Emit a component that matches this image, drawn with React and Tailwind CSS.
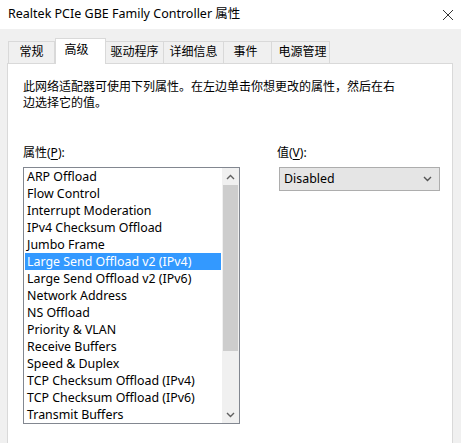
import React from 'react';

const tabs = ['常规', '高级', '驱动程序', '详细信息', '事件', '电源管理'];
const tabWidths = ['w-[47px]', 'w-[51px]', 'w-[58px]', 'w-[60px]', 'w-[48px]', 'w-[58px]'];

const props = [
  'ARP Offload',
  'Flow Control',
  'Interrupt Moderation',
  'IPv4 Checksum Offload',
  'Jumbo Frame',
  'Large Send Offload v2 (IPv4)',
  'Large Send Offload v2 (IPv6)',
  'Network Address',
  'NS Offload',
  'Priority & VLAN',
  'Receive Buffers',
  'Speed & Duplex',
  'TCP Checksum Offload (IPv4)',
  'TCP Checksum Offload (IPv6)',
  'Transmit Buffers',
];

const Chevron = ({ up, className }) => (
  <svg width="9" height="6" viewBox="0 0 9 6" className={className}>
    <path
      d={up ? 'M1 5 L4.5 1.5 L8 5' : 'M1 1 L4.5 4.5 L8 1'}
      fill="none"
      stroke="currentColor"
      strokeWidth="1.4"
    />
  </svg>
);

const App = () => {
  return (
    <div className="w-[461px] h-[443px] overflow-hidden bg-[#f0f0f0] text-[12px] text-black font-['Noto_Sans','Noto_Sans_CJK_SC',sans-serif] flex flex-col">
      {/* title bar */}
      <div className="h-[29px] bg-white flex items-center justify-between pl-2 pr-[7px] shrink-0">
        <span className="text-[12.5px] leading-none">Realtek PCIe GBE Family Controller 属性</span>
        <svg width="12" height="12" viewBox="0 0 12 12" className="text-[#333]">
          <path d="M1 1 L11 11 M11 1 L1 11" stroke="currentColor" strokeWidth="1" />
        </svg>
      </div>

      {/* tabs */}
      <div className="h-[34px] flex items-end pl-2 shrink-0">
        {tabs.map((t, i) =>
          i === 1 ? (
            <div
              key={t}
              className={`${tabWidths[i]} h-[26px] -mb-px bg-white border border-b-0 border-[#d9d9d9] relative z-10 flex items-start justify-center pt-[2px] pr-2`}
            >
              {t}
            </div>
          ) : (
            <div
              key={t}
              className={`${tabWidths[i]} h-[22px] border border-b-0 border-[#d9d9d9] ${i >= 2 ? 'border-l-0' : ''} bg-[#f0f0f0] flex items-center justify-center pb-px ${i === 5 ? 'pl-1' : ''} ${i === 4 ? 'pr-1' : ''}`}
            >
              {t}
            </div>
          )
        )}
      </div>

      {/* panel */}
      <div className="flex-1 ml-[7px] mr-2 bg-white border border-b-0 border-[#d9d9d9] pl-[15px] pt-[15px]">
        <p className="leading-[16px] w-[380px]">
          此网络适配器可使用下列属性。在左边单击你想更改的属性，然后在右
          <br />
          边选择它的值。
        </p>

        <div className="flex mt-[33px]">
          <div className="w-[217px]">
            <div className="h-[18px] leading-[18px] mb-[5px]">
              属性(<span className="underline underline-offset-2">P</span>):
            </div>
            <div className="h-[257px] border border-[#828790] flex">
              <div className="flex-1 flex flex-col text-[12.4px]">
                {props.map((p, i) => (
                  <div
                    key={p}
                    className={`h-[17px] leading-[17px] shrink-0 pl-[2px] mx-px whitespace-nowrap ${
                      i === 5 ? 'bg-[#3399ff] text-white' : ''
                    }`}
                  >
                    {p}
                  </div>
                ))}
              </div>
              <div className="w-[17px] bg-[#f0f0f0] flex flex-col">
                <div className="h-[17px] flex items-center justify-center text-[#606060]">
                  <Chevron up />
                </div>
                <div className="h-[166px] bg-[#cdcdcd] mx-px" />
                <div className="flex-1" />
                <div className="h-[17px] flex items-center justify-center text-[#606060]">
                  <Chevron />
                </div>
              </div>
            </div>
          </div>

          <div className="ml-[37px]">
            <div className="h-[18px] leading-[18px] mb-[5px]">
              值(<span className="underline underline-offset-2">V</span>):
            </div>
            <div className="ml-[2px] w-[161px] h-[24px] bg-[#e5e5e5] border border-[#adadad] flex items-center justify-between pl-[4px] pr-[7px] text-[12.4px]">
              <span>Disabled</span>
              <Chevron className="text-[#555]" />
            </div>
          </div>
        </div>
      </div>
    </div>
  );
};

export default App;
